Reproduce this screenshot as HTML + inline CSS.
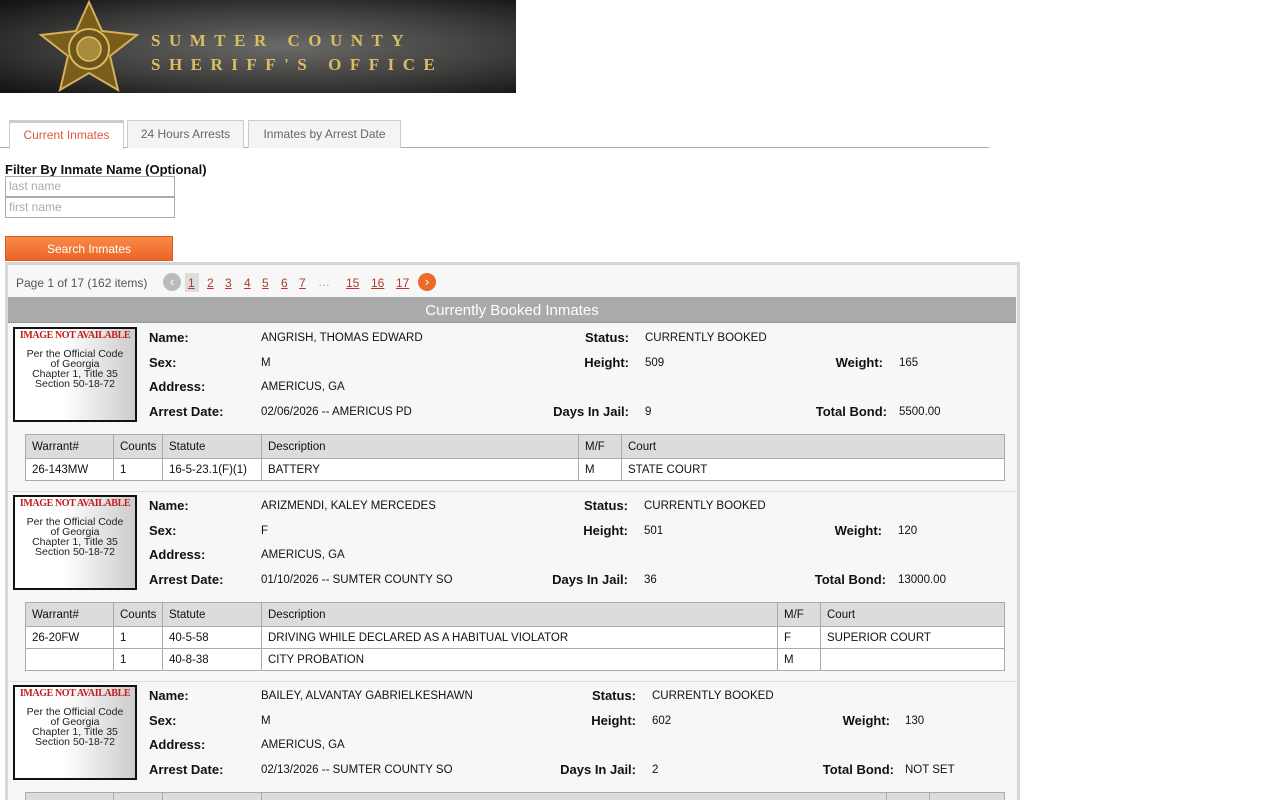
<!DOCTYPE html>
<html><head><meta charset="utf-8"><style>
*{margin:0;padding:0;box-sizing:border-box}
html{width:1280px;height:800px;overflow:hidden}
body{width:1280px;height:800px;overflow:hidden;background:#fff;font-family:"Liberation Sans",Tahoma,sans-serif;font-size:12px;color:#111;position:relative}
.a{position:absolute;white-space:nowrap}
.lb{position:absolute;font-weight:bold;font-size:13px;white-space:nowrap;line-height:16px}
.v{position:absolute;white-space:nowrap;line-height:16px;font-size:11.5px}
.r{text-align:right}
.tab{position:absolute;top:120px;height:28px;border:1px solid #ccc;border-bottom:none;background:#f4f4f4;color:#666;font-size:12px;line-height:27px;text-align:center}
.inp{position:absolute;left:5px;width:170px;height:21px;border:1px solid #aaa;color:#aaa;padding-left:3px;line-height:19px;font-size:12px;background:#fff}
.pg{position:absolute;top:275px;color:#b03a2e;text-decoration:underline;font-size:12px;line-height:16px}
.photo{position:absolute;left:13px;width:124px;height:95px;border:2px solid #111;background:linear-gradient(90deg,#fff 40%,#ccc);text-align:center;font-family:"Liberation Sans",Arial,sans-serif}
.photo b{display:block;color:#c31d1d;font-family:"Liberation Serif",serif;font-size:10px;letter-spacing:-0.4px;margin-top:1px}
.photo span{display:block;font-size:10.5px;line-height:10px;margin-top:8px;color:#222}
.rec{position:absolute;left:8px;width:1008px;height:100px;background:#f7f7f7}
table{position:absolute;left:25px;width:980px;border-collapse:collapse;font-size:11.5px;background:#fff;table-layout:fixed}
td,th{border:1px solid #aaa;padding:0 6px;text-align:left;font-weight:normal;height:22px;white-space:nowrap;overflow:hidden}
th{background:#dcdcdc;height:24px}
.sep{position:absolute;left:8px;width:1008px;height:1px;background:#ddd}
</style></head><body>

<div class="a" style="left:0;top:0;width:516px;height:93px;background:radial-gradient(ellipse at 55% 50%,#6a6a68 0%,#3d3d3b 55%,#111 100%);overflow:hidden">
<svg width="516" height="93" style="position:absolute;left:0;top:0">
<polygon points="89,2 102,31 137,35 110,56 118,90 89,73 60,90 68,56 41,35 76,31" fill="#7a5d1a" stroke="#d4b15a" stroke-width="2"/>
<circle cx="89" cy="49" r="20" fill="#6e5418" stroke="#d8b860" stroke-width="2"/>
<circle cx="89" cy="49" r="12" fill="#a88a3a" stroke="#e0c070" stroke-width="1.5"/>
<text x="151" y="46" fill="#d9be62" font-family="Liberation Serif,serif" font-size="17" font-weight="bold" letter-spacing="8.5">SUMTER COUNTY</text>
<text x="151" y="70" fill="#d9be62" font-family="Liberation Serif,serif" font-size="17" font-weight="bold" letter-spacing="8.5">SHERIFF'S OFFICE</text>
</svg></div>

<div class="a" style="left:0;top:147px;width:989px;height:1px;background:#aaa"></div>
<div class="tab" style="left:9px;width:115px;background:#fff;color:#e2583e;border-top:3px solid #ccc;height:29px;line-height:25px">Current Inmates</div>
<div class="tab" style="left:127px;width:117px">24 Hours Arrests</div>
<div class="tab" style="left:248px;width:153px">Inmates by Arrest Date</div>

<div class="a" style="left:5px;top:162px;font-weight:bold;font-size:13px">Filter By Inmate Name (Optional)</div>
<div class="inp" style="top:176px">last name</div>
<div class="inp" style="top:197px">first name</div>
<div class="a" style="left:5px;top:236px;width:168px;height:25px;background:linear-gradient(#f78a4a,#ee6424);color:#fff;text-align:center;line-height:25px;border:1px solid #d85a20">Search Inmates</div>

<div class="a" style="left:5px;top:262px;width:1015px;height:540px;border:3px solid #d6d6d6;border-bottom:none;background:#f7f7f7"></div>
<div class="a" style="left:16px;top:275px;color:#555;line-height:16px">Page 1 of 17 (162 items)</div>
<div class="a" style="left:163px;top:273px;width:18px;height:18px;border-radius:50%;background:#bbb;color:#fff;text-align:center;line-height:17px;font-size:13px">‹</div>
<div class="a" style="left:185px;top:273px;width:14px;height:19px;background:#ddd"></div>
<div class="pg" style="left:188px">1</div>
<div class="pg" style="left:207px">2</div>
<div class="pg" style="left:225px">3</div>
<div class="pg" style="left:244px">4</div>
<div class="pg" style="left:262px">5</div>
<div class="pg" style="left:281px">6</div>
<div class="pg" style="left:299px">7</div>
<div class="a" style="left:318px;top:275px;color:#999">…</div>
<div class="pg" style="left:346px">15</div>
<div class="pg" style="left:371px">16</div>
<div class="pg" style="left:396px">17</div>
<div class="a" style="left:418px;top:273px;width:18px;height:18px;border-radius:50%;background:#ee6a2a;color:#fff;text-align:center;line-height:17px;font-size:13px">›</div>

<div class="a" style="left:8px;top:297px;width:1008px;height:26px;background:#aaa;border-bottom:1px dotted #888;color:#fff;font-size:15px;text-align:center;line-height:27px">Currently Booked Inmates</div>

<!-- record 1 -->
<div class="rec" style="top:324px"></div>
<div class="photo" style="top:327px"><b>IMAGE NOT AVAILABLE</b><span>Per the Official Code<br>of Georgia<br>Chapter 1, Title 35<br>Section 50-18-72</span></div>
<div class="lb" style="left:149px;top:330px">Name:</div><div class="v" style="left:261px;top:330px">ANGRISH, THOMAS EDWARD</div>
<div class="lb" style="left:149px;top:355px">Sex:</div><div class="v" style="left:261px;top:355px">M</div>
<div class="lb" style="left:149px;top:379px">Address:</div><div class="v" style="left:261px;top:379px">AMERICUS, GA</div>
<div class="lb" style="left:149px;top:404px">Arrest Date:</div><div class="v" style="left:261px;top:404px">02/06/2026 -- AMERICUS PD</div>
<div class="lb r" style="right:651px;top:330px">Status:</div><div class="v" style="left:645px;top:330px">CURRENTLY BOOKED</div>
<div class="lb r" style="right:651px;top:355px">Height:</div><div class="v" style="left:645px;top:355px">509</div>
<div class="lb r" style="right:651px;top:404px">Days In Jail:</div><div class="v" style="left:645px;top:404px">9</div>
<div class="lb r" style="right:397px;top:355px">Weight:</div><div class="v" style="left:899px;top:355px">165</div>
<div class="lb r" style="right:393px;top:404px">Total Bond:</div><div class="v" style="left:899px;top:404px">5500.00</div>
<table style="top:434px"><tr><th style="width:88px">Warrant#</th><th style="width:49px">Counts</th><th style="width:99px">Statute</th><th style="width:317px">Description</th><th style="width:43px">M/F</th><th>Court</th></tr>
<tr><td>26-143MW</td><td>1</td><td>16-5-23.1(F)(1)</td><td>BATTERY</td><td>M</td><td>STATE COURT</td></tr></table>
<div class="sep" style="top:491px"></div>

<!-- record 2 -->
<div class="rec" style="top:492px"></div>
<div class="photo" style="top:495px"><b>IMAGE NOT AVAILABLE</b><span>Per the Official Code<br>of Georgia<br>Chapter 1, Title 35<br>Section 50-18-72</span></div>
<div class="lb" style="left:149px;top:498px">Name:</div><div class="v" style="left:261px;top:498px">ARIZMENDI, KALEY MERCEDES</div>
<div class="lb" style="left:149px;top:523px">Sex:</div><div class="v" style="left:261px;top:523px">F</div>
<div class="lb" style="left:149px;top:547px">Address:</div><div class="v" style="left:261px;top:547px">AMERICUS, GA</div>
<div class="lb" style="left:149px;top:572px">Arrest Date:</div><div class="v" style="left:261px;top:572px">01/10/2026 -- SUMTER COUNTY SO</div>
<div class="lb r" style="right:652px;top:498px">Status:</div><div class="v" style="left:644px;top:498px">CURRENTLY BOOKED</div>
<div class="lb r" style="right:652px;top:523px">Height:</div><div class="v" style="left:644px;top:523px">501</div>
<div class="lb r" style="right:652px;top:572px">Days In Jail:</div><div class="v" style="left:644px;top:572px">36</div>
<div class="lb r" style="right:398px;top:523px">Weight:</div><div class="v" style="left:898px;top:523px">120</div>
<div class="lb r" style="right:394px;top:572px">Total Bond:</div><div class="v" style="left:898px;top:572px">13000.00</div>
<table style="top:602px"><tr><th style="width:88px">Warrant#</th><th style="width:49px">Counts</th><th style="width:99px">Statute</th><th style="width:516px">Description</th><th style="width:43px">M/F</th><th>Court</th></tr>
<tr><td>26-20FW</td><td>1</td><td>40-5-58</td><td>DRIVING WHILE DECLARED AS A HABITUAL VIOLATOR</td><td>F</td><td>SUPERIOR COURT</td></tr>
<tr><td></td><td>1</td><td>40-8-38</td><td>CITY PROBATION</td><td>M</td><td></td></tr></table>
<div class="sep" style="top:681px"></div>

<!-- record 3 -->
<div class="rec" style="top:682px"></div>
<div class="photo" style="top:685px"><b>IMAGE NOT AVAILABLE</b><span>Per the Official Code<br>of Georgia<br>Chapter 1, Title 35<br>Section 50-18-72</span></div>
<div class="lb" style="left:149px;top:688px">Name:</div><div class="v" style="left:261px;top:688px">BAILEY, ALVANTAY GABRIELKESHAWN</div>
<div class="lb" style="left:149px;top:713px">Sex:</div><div class="v" style="left:261px;top:713px">M</div>
<div class="lb" style="left:149px;top:737px">Address:</div><div class="v" style="left:261px;top:737px">AMERICUS, GA</div>
<div class="lb" style="left:149px;top:762px">Arrest Date:</div><div class="v" style="left:261px;top:762px">02/13/2026 -- SUMTER COUNTY SO</div>
<div class="lb r" style="right:644px;top:688px">Status:</div><div class="v" style="left:652px;top:688px">CURRENTLY BOOKED</div>
<div class="lb r" style="right:644px;top:713px">Height:</div><div class="v" style="left:652px;top:713px">602</div>
<div class="lb r" style="right:644px;top:762px">Days In Jail:</div><div class="v" style="left:652px;top:762px">2</div>
<div class="lb r" style="right:390px;top:713px">Weight:</div><div class="v" style="left:905px;top:713px">130</div>
<div class="lb r" style="right:386px;top:762px">Total Bond:</div><div class="v" style="left:905px;top:762px">NOT SET</div>
<table style="top:792px"><tr><th style="width:88px">&nbsp;</th><th style="width:49px"></th><th style="width:99px"></th><th style="width:625px"></th><th style="width:43px"></th><th></th></tr></table>
</body></html>
